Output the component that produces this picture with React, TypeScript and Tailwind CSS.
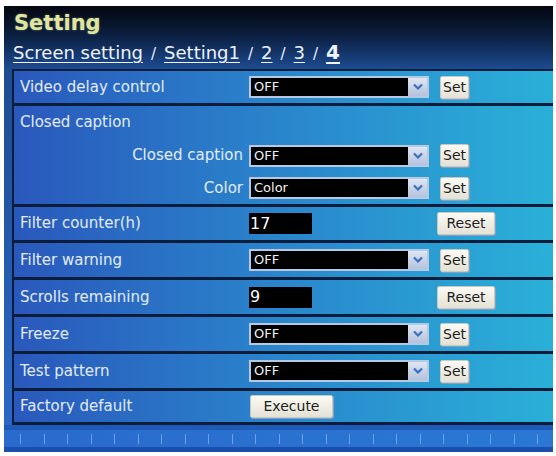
import React from 'react';

const font = "font-['DejaVu_Sans',sans-serif]";

function Chevron() {
  return (
    <svg width="12" height="8" viewBox="0 0 12 8">
      <path d="M2 1.5 L6 5.5 L10 1.5" fill="none" stroke="#3a6fc4" strokeWidth="2.2" />
    </svg>
  );
}

function Select({ value }: { value: string }) {
  return (
    <div className="flex h-[22px] w-[180px] border-2 border-[#b6c8e2] bg-black">
      <div className="flex flex-1 items-center pl-[3px] text-[13px] text-[#f2f2f2]">{value}</div>
      <div className="flex w-[19px] items-center justify-center bg-gradient-to-b from-[#dfe6f2] to-[#b4c2dc]">
        <Chevron />
      </div>
    </div>
  );
}

function Btn({ label, w }: { label: string; w: string }) {
  return (
    <div
      className={`flex h-[23px] ${w} items-center justify-center rounded-[2px] border border-[#c9c9c0] bg-gradient-to-b from-[#fbfaf4] to-[#e4e2d6] text-[14px] text-[#1e1e1e] shadow-[1px_1px_0_#7fa0c8]`}
    >
      {label}
    </div>
  );
}

function SelectSet({ value }: { value: string }) {
  return (
    <div className="flex items-center">
      <Select value={value} />
      <div className="ml-[11px]">
        <Btn label="Set" w="w-[29px]" />
      </div>
    </div>
  );
}

function Counter({ value }: { value: string }) {
  return (
    <div className="flex items-center">
      <div className="flex h-[21px] w-[63px] items-center bg-black pl-[1px] text-[16px] text-white">{value}</div>
      <div className="ml-[125px]">
        <Btn label="Reset" w="w-[58px]" />
      </div>
    </div>
  );
}

function Row({ label, h, children }: { label: string; h: string; children?: React.ReactNode }) {
  return (
    <div className={`flex ${h} items-center border-b-[3px] border-[#0b1d3a]`}>
      <div className="w-[235px] pl-[6px] text-[15px] text-[#e4ecf8]">{label}</div>
      {children}
    </div>
  );
}

export default function App() {
  const ticks = Array.from({ length: 23 }, (_, i) => i);
  return (
    <div className={`${font} h-[456px] w-[556px] bg-white pl-[4px] pt-[6px]`}>
      <div className="flex h-[446px] w-[549px] flex-col overflow-hidden bg-[#0a1428]">
        <div className="h-[63px] bg-gradient-to-b from-[#04070e] via-[#0d2246] to-[#1d4c92] pl-[9px] pt-[4px]">
          <div className="pl-[1px] text-[21px] font-bold leading-[26px] text-[#dfe59e] [text-shadow:0_0_2px_#f4f8c080]">Setting</div>
          <div className="mt-[3px] flex items-baseline text-[18px] leading-[26px] text-[#eef4ff]">
            <span className="underline underline-offset-[3px]">Screen setting</span>
            <span className="mx-[8px] text-[15px]">/</span>
            <span className="underline underline-offset-[3px]">Setting1</span>
            <span className="mx-[8px] text-[15px]">/</span>
            <span className="underline underline-offset-[3px]">2</span>
            <span className="mx-[8px] text-[15px]">/</span>
            <span className="underline underline-offset-[3px]">3</span>
            <span className="mx-[8px] text-[15px]">/</span>
            <span className="text-[20px] font-bold underline underline-offset-[3px]">4</span>
          </div>
        </div>

        <div className="flex">
          <div className="w-[8px] bg-gradient-to-b from-[#1d4c92] to-[#2a68c6]" />
          <div className="flex-1 border-l-2 border-t-2 border-[#0b1d3a] bg-gradient-to-r from-[#2a58bc] via-[#2a86cc] to-[#2ab0d8]">
            <Row label="Video delay control" h="h-[35px]">
              <SelectSet value="OFF" />
            </Row>
            <div className="flex h-[101px] flex-col border-b-[3px] border-[#0b1d3a]">
              <div className="flex h-[33px] items-center pl-[6px] text-[15px] text-[#e4ecf8]">Closed caption</div>
              <div className="flex h-[33px] items-center">
                <div className="w-[235px] pr-[6px] text-right text-[15px] text-[#e4ecf8]">Closed caption</div>
                <SelectSet value="OFF" />
              </div>
              <div className="flex h-[32px] items-center">
                <div className="w-[235px] pr-[6px] text-right text-[15px] text-[#e4ecf8]">Color</div>
                <SelectSet value="Color" />
              </div>
            </div>
            <Row label="Filter counter(h)" h="h-[36px]">
              <Counter value="17" />
            </Row>
            <Row label="Filter warning" h="h-[37px]">
              <SelectSet value="OFF" />
            </Row>
            <Row label="Scrolls remaining" h="h-[37px]">
              <Counter value="9" />
            </Row>
            <Row label="Freeze" h="h-[37px]">
              <SelectSet value="OFF" />
            </Row>
            <Row label="Test pattern" h="h-[37px]">
              <SelectSet value="OFF" />
            </Row>
            <Row label="Factory default" h="h-[34px]">
              <div className="ml-[1px]">
                <Btn label="Execute" w="w-[83px]" />
              </div>
            </Row>
          </div>
        </div>

        <div className="flex flex-1 flex-col bg-[#1c56b6]">
          <div className="h-[5px] bg-[#1e5ab8]" />
          <div className="flex h-[17px] items-center gap-[22.5px] bg-gradient-to-r from-[#2a6acc] to-[#2a78d4] pl-[16px]">
            {ticks.map((i) => (
              <div key={i} className="h-[10px] w-[1px] bg-[#6aa2e4]" />
            ))}
          </div>
          <div className="flex-1 bg-[#1a4fae]" />
        </div>
      </div>
    </div>
  );
}
